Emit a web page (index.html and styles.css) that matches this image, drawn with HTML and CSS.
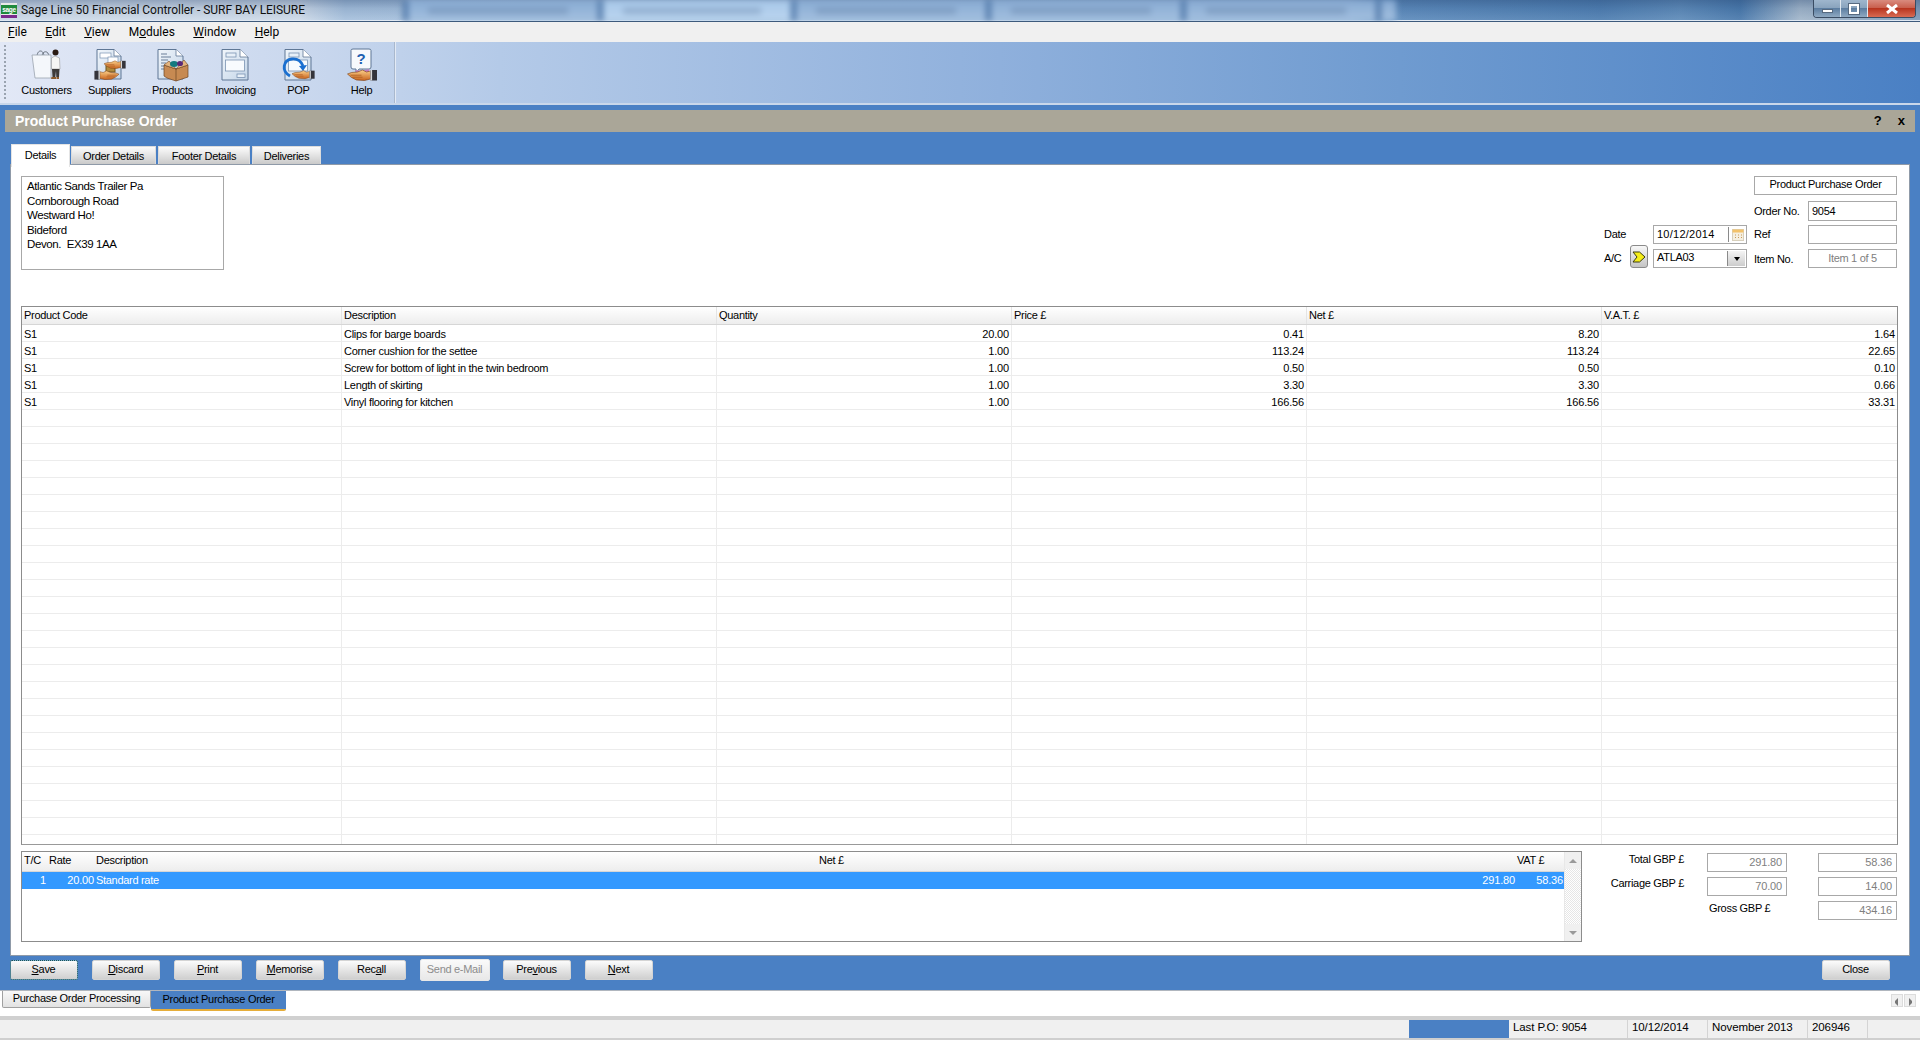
FILE: index.html
```html
<!DOCTYPE html>
<html lang="en">
<head>
<meta charset="utf-8">
<title>Sage Line 50 Financial Controller - SURF BAY LEISURE</title>
<link rel="stylesheet" href="styles.css">
</head>
<body>
<svg class="defs" width="0" height="0" aria-hidden="true">
  <defs>
    <linearGradient id="docFill" x1="0" y1="0" x2="1" y2="1"><stop offset="0" stop-color="#f1f6fb"/><stop offset="1" stop-color="#c3d5e8"/></linearGradient>
    <linearGradient id="flesh" x1="0" y1="0" x2="0" y2="1"><stop offset="0" stop-color="#fbd08a"/><stop offset="1" stop-color="#c8641e"/></linearGradient>
    <symbol id="hand" viewBox="0 0 30 12">
      <path d="M0 5 L4 3.5 L10 3 L15 1 L19 3 L23 2 L23 10 L17 11.5 L9 11 L4 8.5 Z" fill="url(#flesh)" stroke="#7a3d12" stroke-width=".6"/>
      <path d="M3 6.2 H14 M5 8.2 H15" stroke="#a8551a" stroke-width=".7" fill="none"/>
      <rect x="23" y="1" width="6.5" height="10.5" fill="#34343a"/>
      <rect x="23" y="1" width="1.6" height="10.5" fill="#d8d8d8"/>
    </symbol>
  </defs>
</svg>

<header class="titlebar">
  <svg class="appicon" viewBox="0 0 16 15" width="16" height="15">
    <rect width="16" height="15" fill="#e8e8e8"/>
    <rect y="2" width="16" height="9" fill="#1f8a3c"/>
    <rect y="12" width="16" height="3" fill="#7a2a8c"/>
    <text x="8" y="9" font-size="6.5" font-family="Liberation Sans" font-weight="700" fill="#fff" text-anchor="middle">sage</text>
  </svg>
  <span class="apptitle">Sage Line 50 Financial Controller - SURF BAY LEISURE</span>
  <div class="blurtabs" aria-hidden="true">
    <span class="bt"><i></i></span><span class="bt bright"><i></i></span><span class="bt"><i></i></span><span class="bt"><i></i></span><span class="bt"><i></i></span><span class="bt last"></span>
  </div>
  <div class="winbtns">
    <span class="wb wmin"><i></i></span>
    <span class="wb wmax"><i></i></span>
    <span class="wb wclose">
      <svg viewBox="0 0 14 10" width="14" height="10"><path d="M2 1 L12 9 M12 1 L2 9" stroke="#fff" stroke-width="3"/></svg>
    </span>
  </div>
</header>

<nav class="menubar">
  <span><u>F</u>ile</span><span><u>E</u>dit</span><span><u>V</u>iew</span><span>M<u>o</u>dules</span><span><u>W</u>indow</span><span><u>H</u>elp</span>
</nav>

<section class="toolbar">
  <div class="gripper"></div>
  <div class="tools">
    <div class="tool">
      <svg viewBox="0 0 40 34" width="40" height="34">
        <path d="M10 9 C10 1 17 1 17 9 M15 9 C15 2 22 2 22 9" fill="none" stroke="#66707c" stroke-width="1"/>
        <path d="M5 7 L24 7 L24 30 L8 30 Z" fill="#f4f7fb" stroke="#9aa3ae" stroke-width=".8"/>
        <circle cx="28.5" cy="4.5" r="3" fill="#2a1a12"/>
        <path d="M24.5 10 L28 8 L32.5 10 L33 21 L24.5 21 Z" fill="#f6f6f4" stroke="#8b8b8b" stroke-width=".5"/>
        <path d="M25 21 H32.5 L32 29 H29.3 L29 23 L28.3 29 H25.5 Z" fill="#3c3a38"/>
        <path d="M24.5 29 H29 V31 H24 Z M29.5 29 H32 V31 H29.5 Z" fill="#8b5a2a"/>
      </svg>
      <span>Customers</span>
    </div>
    <div class="tool">
      <svg viewBox="0 0 40 34" width="40" height="34">
        <path d="M7 1.5 H24 L31 8 V31 H7 Z" fill="url(#docFill)" stroke="#5f7795"/>
        <path d="M24 1.5 V8 H31" fill="#fff" stroke="#5f7795" stroke-width=".8"/>
        <rect x="10" y="5" width="11" height="5" fill="#fff" stroke="#7a93b2" stroke-width=".7"/>
        <rect x="18" y="9" width="10" height="8" fill="#fff" stroke="#7a93b2" stroke-width=".7"/>
        <rect x="16" y="16" width="9" height="8" fill="#b08a3c" stroke="#6b5420"/>
        <use href="#hand" x="14" y="12" width="22" height="9"/>
        <g transform="translate(36 0) scale(-1 1)"><use href="#hand" x="3" y="22" width="33" height="10"/></g>
      </svg>
      <span>Suppliers</span>
    </div>
    <div class="tool">
      <svg viewBox="0 0 40 34" width="40" height="34">
        <path d="M5 1.5 H23 L30 8 V31 H5 Z" fill="url(#docFill)" stroke="#5f7795"/>
        <path d="M23 1.5 V8 H30" fill="#fff" stroke="#5f7795" stroke-width=".8"/>
        <path d="M8 6 H14 M8 9 H18 M8 12 H15 M8 15 H13 M8 18 H12 M8 21 H11" stroke="#6b7f98" stroke-width="1.2"/>
        <path d="M11 17 L23 21 L35 17 L35 29 L23 33 L14 30 L11 28 Z" fill="#c78a52" stroke="#6e4522" stroke-width=".7"/>
        <path d="M23 21 V33" stroke="#6e4522" stroke-width=".7"/>
        <path d="M11 17 L16 13 L23 21 Z M35 17 L31 12 L23 21 Z" fill="#e3b47e" stroke="#6e4522" stroke-width=".6"/>
        <ellipse cx="21" cy="16" rx="4" ry="3" fill="#147a80"/>
        <ellipse cx="27" cy="15.5" rx="3" ry="2.6" fill="#5a2a78"/>
      </svg>
      <span>Products</span>
    </div>
    <div class="tool">
      <svg viewBox="0 0 40 34" width="40" height="34">
        <path d="M6 1.5 H24 L32 9 V32 H6 Z" fill="url(#docFill)" stroke="#5f7795"/>
        <path d="M24 1.5 V9 H32" fill="#fff" stroke="#5f7795" stroke-width=".8"/>
        <rect x="10" y="5" width="10" height="4" fill="#e8f0f8" stroke="#7a93b2" stroke-width=".8"/>
        <rect x="9.5" y="12" width="19" height="11" fill="#f8fbfe" stroke="#7a93b2" stroke-width=".8"/>
        <rect x="21" y="26" width="8" height="3.5" fill="#e8f0f8" stroke="#7a93b2" stroke-width=".8"/>
      </svg>
      <span>Invoicing</span>
    </div>
    <div class="tool">
      <svg viewBox="0 0 40 34" width="40" height="34">
        <path d="M6 1.5 H24 L32 9 V32 H6 Z" fill="url(#docFill)" stroke="#5f7795"/>
        <path d="M24 1.5 V9 H32" fill="#fff" stroke="#5f7795" stroke-width=".8"/>
        <rect x="10" y="5" width="10" height="4" fill="#e8f0f8" stroke="#7a93b2" stroke-width=".8"/>
        <rect x="9.5" y="12" width="19" height="11" fill="#f8fbfe" stroke="#7a93b2" stroke-width=".8"/>
        <path d="M11 28 C2 23 4 12 13 11 C18 10.5 22 13 24 18" fill="none" stroke="#1a6fd0" stroke-width="2.8"/>
        <path d="M20 18 L28 17 L24 23 Z" fill="#1a6fd0"/>
        <use href="#hand" x="13" y="21" width="23" height="11"/>
      </svg>
      <span>POP</span>
    </div>
    <div class="tool">
      <svg viewBox="0 0 40 34" width="40" height="34">
        <path d="M9 2.5 Q9 1 11 1 H27 Q29 1 29 2.5 V19 Q29 21 27 21 H17 L14 25 L14 21 H11 Q9 21 9 19 Z" fill="#f6f9fc" stroke="#5f7795"/>
        <text x="19" y="16" font-family="Liberation Sans" font-weight="700" font-size="15" fill="#1f5fb0" text-anchor="middle">?</text>
        <path d="M13 22 Q20 24 27 21 L27 24 L15 25 Z" fill="#c07ac0"/>
        <use href="#hand" x="5" y="21" width="31" height="12"/>
      </svg>
      <span>Help</span>
    </div>
  </div>
  <div class="toolsep"></div>
</section>

<main class="window">
  <div class="caption">
    <span class="caption-title">Product Purchase Order</span>
    <span class="caption-btns"><b>?</b><b>x</b></span>
  </div>

  <div class="tabs">
    <span class="tab active">Details</span>
    <span class="tab t-order">Order Details</span>
    <span class="tab t-footer">Footer Details</span>
    <span class="tab t-deliv">Deliveries</span>
  </div>

  <div class="panel">
    <div class="head">
      <div class="address">
        <div>Atlantic Sands Trailer Pa</div>
        <div>Cornborough Road</div>
        <div>Westward Ho!</div>
        <div>Bideford</div>
        <div>Devon.&nbsp; EX39 1AA</div>
      </div>
      <div class="orderform">
        <div class="frow r1"><span class="box wide center">Product Purchase Order</span></div>
        <div class="frow r2"><span class="lab lab-r">Order No.</span><span class="box num">9054</span></div>
        <div class="frow r3">
          <span class="lab lab-date">Date</span>
          <span class="box combo"><span class="dateval">10/12/2014</span><span class="cbtn cal"><svg viewBox="0 0 12 12" width="12" height="12"><rect x=".5" y=".5" width="11" height="11" fill="#f5efe0" stroke="#d8d0bc"/><rect x=".5" y=".5" width="11" height="3" fill="#f3c26a"/><path d="M3 6 H4 M6 6 H7 M9 6 H10 M3 8.5 H4 M6 8.5 H7 M9 8.5 H10" stroke="#c89a58"/></svg></span></span>
          <span class="lab lab-r">Ref</span><span class="box num"></span>
        </div>
        <div class="frow r4">
          <span class="lab lab-ac">A/C</span>
          <span class="acbtn"><svg viewBox="0 0 14 12" width="14" height="12"><path d="M1 1 H7.5 L13 6 L7.5 11 H1 L5 6 Z" fill="#f5ee18" stroke="#3a3a10"/></svg></span>
          <span class="box combo"><span class="acval">ATLA03</span><span class="cbtn drop"><i></i></span></span>
          <span class="lab lab-r lab-item">Item No.</span><span class="box num dis center">Item 1 of 5</span>
        </div>
      </div>
    </div>

    <div class="grid">
      <div class="row hdr"><span>Product Code</span><span>Description</span><span>Quantity</span><span>Price £</span><span>Net £</span><span>V.A.T. £</span></div>
      <div class="row"><span>S1</span><span>Clips for barge boards</span><span class="r">20.00</span><span class="r">0.41</span><span class="r">8.20</span><span class="r">1.64</span></div>
      <div class="row"><span>S1</span><span>Corner cushion for the settee</span><span class="r">1.00</span><span class="r">113.24</span><span class="r">113.24</span><span class="r">22.65</span></div>
      <div class="row"><span>S1</span><span>Screw for bottom of light in the twin bedroom</span><span class="r">1.00</span><span class="r">0.50</span><span class="r">0.50</span><span class="r">0.10</span></div>
      <div class="row"><span>S1</span><span>Length of skirting</span><span class="r">1.00</span><span class="r">3.30</span><span class="r">3.30</span><span class="r">0.66</span></div>
      <div class="row"><span>S1</span><span>Vinyl flooring for kitchen</span><span class="r">1.00</span><span class="r">166.56</span><span class="r">166.56</span><span class="r">33.31</span></div>
      <div class="row"><span></span><span></span><span></span><span></span><span></span><span></span></div>
      <div class="row"><span></span><span></span><span></span><span></span><span></span><span></span></div>
      <div class="row"><span></span><span></span><span></span><span></span><span></span><span></span></div>
      <div class="row"><span></span><span></span><span></span><span></span><span></span><span></span></div>
      <div class="row"><span></span><span></span><span></span><span></span><span></span><span></span></div>
      <div class="row"><span></span><span></span><span></span><span></span><span></span><span></span></div>
      <div class="row"><span></span><span></span><span></span><span></span><span></span><span></span></div>
      <div class="row"><span></span><span></span><span></span><span></span><span></span><span></span></div>
      <div class="row"><span></span><span></span><span></span><span></span><span></span><span></span></div>
      <div class="row"><span></span><span></span><span></span><span></span><span></span><span></span></div>
      <div class="row"><span></span><span></span><span></span><span></span><span></span><span></span></div>
      <div class="row"><span></span><span></span><span></span><span></span><span></span><span></span></div>
      <div class="row"><span></span><span></span><span></span><span></span><span></span><span></span></div>
      <div class="row"><span></span><span></span><span></span><span></span><span></span><span></span></div>
      <div class="row"><span></span><span></span><span></span><span></span><span></span><span></span></div>
      <div class="row"><span></span><span></span><span></span><span></span><span></span><span></span></div>
      <div class="row"><span></span><span></span><span></span><span></span><span></span><span></span></div>
      <div class="row"><span></span><span></span><span></span><span></span><span></span><span></span></div>
      <div class="row"><span></span><span></span><span></span><span></span><span></span><span></span></div>
      <div class="row"><span></span><span></span><span></span><span></span><span></span><span></span></div>
      <div class="row"><span></span><span></span><span></span><span></span><span></span><span></span></div>
      <div class="row"><span></span><span></span><span></span><span></span><span></span><span></span></div>
      <div class="row"><span></span><span></span><span></span><span></span><span></span><span></span></div>
      <div class="row"><span></span><span></span><span></span><span></span><span></span><span></span></div>
      <div class="row"><span></span><span></span><span></span><span></span><span></span><span></span></div>
      <div class="row"><span></span><span></span><span></span><span></span><span></span><span></span></div>
    </div>

    <div class="foot">
      <div class="taxgrid">
        <div class="taxmain">
          <div class="taxrow taxhdr"><span>T/C</span><span>Rate</span><span>Description</span><span>Net £</span><span>VAT £</span></div>
          <div class="taxrow sel"><span class="r tc">1</span><span class="r">20.00</span><span>Standard rate</span><span class="r">291.80</span><span class="r">58.36</span></div>
        </div>
        <div class="scroll">
          <span class="sb-btn"><i class="up"></i></span>
          <span class="sb-track"></span>
          <span class="sb-btn"><i class="down"></i></span>
        </div>
      </div>
      <div class="totals">
        <span class="tl">Total GBP £</span><span class="box tv tmid">291.80</span><span class="box tv">58.36</span>
        <span class="tl">Carriage GBP £</span><span class="box tv tmid">70.00</span><span class="box tv">14.00</span>
        <span class="tl"></span><span class="gross">Gross GBP £</span><span class="box tv">434.16</span>
      </div>
    </div>
  </div>

  <div class="actions">
    <button class="btn focus"><u>S</u>ave</button>
    <button class="btn"><u>D</u>iscard</button>
    <button class="btn"><u>P</u>rint</button>
    <button class="btn"><u>M</u>emorise</button>
    <button class="btn">Rec<u>a</u>ll</button>
    <button class="btn off">Send e-Mail</button>
    <button class="btn">Pre<u>v</u>ious</button>
    <button class="btn"><u>N</u>ext</button>
    <button class="btn close">Close</button>
  </div>
</main>

<div class="doctabs">
  <span class="dt">Purchase Order Processing</span>
  <span class="dt cur">Product Purchase Order</span>
  <span class="dtarrows"><i class="al"></i><i class="ar"></i></span>
</div>

<footer class="status">
  <span class="st-blank"></span>
  <span class="st-blue"></span>
  <span class="st s1">Last P.O: 9054</span>
  <span class="st s2">10/12/2014</span>
  <span class="st s3">November 2013</span>
  <span class="st s4">206946</span>
  <span class="st s5"></span>
</footer>
</body>
</html>
```
FILE: styles.css
```css
* { box-sizing: border-box; }
html, body { margin: 0; padding: 0; }
body {
  width: 1920px; height: 1040px; overflow: hidden;
  display: flex; flex-direction: column;
  font-family: "Liberation Sans", Roboto, sans-serif;
  font-size: 11px; line-height: 13px; letter-spacing: -0.3px; color: #000;
  background: #4a80c4;
}
.defs { position: absolute; }
u { text-decoration: underline; }

/* title bar */
.titlebar {
  height: 22px; flex: none; display: flex; align-items: flex-start; overflow: hidden;
  background:
    linear-gradient(180deg, rgba(30,60,105,.35) 0, rgba(30,60,105,.12) 40%, rgba(255,255,255,.08) 100%),
    linear-gradient(90deg, #cfdbe9 0, #cfdbe9 300px, #a8c2de 345px, #97b7da 1350px, #5e8cbd 1395px, #4f7fb2 1600px, #5f8cba 1680px, #4a7aad 1740px, #a4b8cc 1800px, #7f9cba 1920px);
  border-bottom: 1px solid #3d5a7c;
  box-shadow: inset 0 -1px 0 #dfe8f2;
}
.appicon { margin: 3px 4px 0 1px; flex: none; }
.apptitle { font: 12px/20px Roboto, sans-serif; letter-spacing: -0.05px; color: #101010; width: 284px; flex: none; white-space: nowrap; }
.blurtabs { display: flex; width: 1000px; margin-left: 98px; height: 21px; filter: blur(3px); flex: none; }
.bt { width: 195px; height: 21px; background: linear-gradient(180deg, #86a9d2, #a4c1e0); border-left: 5px solid #4f77a8; padding: 8px 30px 0 20px; }
.bt i { display: block; height: 6px; background: rgba(80,110,150,.35); }
.bt.bright { width: 193px; background: linear-gradient(180deg, #a6c6e8, #bcd6f0); }
.bt.last { width: 20px; padding: 0; }
.winbtns { margin-left: auto; margin-right: 4px; display: flex; height: 18px; border: 1px solid #3a4c63; border-top: 0; border-radius: 0 0 4px 4px; overflow: hidden; flex: none; }
.wb { display: flex; align-items: center; justify-content: center; height: 17px; }
.wmin, .wmax { width: 27px; background: linear-gradient(180deg, #9fb6cd 0, #8aa4be 45%, #5d7ea1 50%, #8fa9c2 100%); border-right: 1px solid #dfe7ef; }
.wmin i { width: 11px; height: 4px; background: #fff; border: 1px solid #576a80; margin-top: 5px; }
.wmax i { width: 10px; height: 10px; border: 2px solid #fff; outline: 1px solid #576a80; }
.wclose { width: 47px; background: linear-gradient(180deg, #d98b7e 0, #c9604e 45%, #b8351f 50%, #d86a52 100%); }

/* menu */
.menubar { height: 20px; flex: none; background: #f0f0f0; display: flex; gap: 18.5px; padding: 3px 0 0 8px; font: 12px/15px Roboto, sans-serif; letter-spacing: 0; }

/* toolbar */
.toolbar {
  height: 63px; flex: none; display: flex;
  background: linear-gradient(90deg, #e2e8f6 0, #cad8ee 300px, #b4cae8 500px, #8fb0dc 1000px, #6f9bd0 1400px, #4a80c4 1920px);
  border-bottom: 2px solid #c9d7ea;
}
.gripper { width: 2px; margin: 3px 0 4px 4px; border-left: 2px dotted #9aa3b0; flex: none; }
.tools { display: flex; margin-left: 9px; flex: none; }
.tool { width: 63px; display: flex; flex-direction: column; align-items: center; padding-top: 6px; }
.tool span { line-height: 13px; margin-top: 2px; }
.toolsep { width: 1px; margin-left: 1px; height: 61px; background: #a9b8cd; box-shadow: 1px 0 0 #e3eaf5; flex: none; }

/* window */
.window { flex: 1; min-height: 0; display: flex; flex-direction: column; padding-top: 5px; background: #4a80c4; }
.caption { height: 22px; flex: none; margin: 0 5px; background: #aaa698; display: flex; align-items: center; justify-content: space-between; padding: 0 10px; color: #fff; letter-spacing: 0; }
.caption-title { font: 700 14px/22px "Liberation Sans", sans-serif; }
.caption-btns { display: flex; gap: 16px; color: #000; font: 700 13px/22px "Liberation Sans", sans-serif; }

.tabs { display: flex; height: 20px; margin: 12px 0 0 11px; flex: none; align-items: flex-end; position: relative; z-index: 1; }
.tab { height: 18px; padding-top: 2px; background: linear-gradient(180deg, #fcfcfc, #cacaca); border: 1px solid #dcdcdc; border-bottom: 0; margin-right: 2px; display: flex; align-items: center; justify-content: center; }
.tab.active { width: 59px; height: 23px; background: #fff; margin-right: 1px; margin-bottom: -3px; align-self: flex-end; padding: 0 0 1px; border-color: #e4e4e4; }
.t-order { width: 85px; }
.t-footer { width: 92px; }
.t-deliv { width: 69px; }

.panel { flex: 1; min-height: 0; margin: 0 10px 0 10px; background: #fff; border: 1px solid #8f9aa8; padding: 11px 11px 13px 10px; display: flex; flex-direction: column; }

.head { display: flex; justify-content: space-between; height: 130px; flex: none; }
.address { width: 203px; height: 94px; border: 1px solid #a8a8a8; padding: 2px 5px; font-size: 11.5px; line-height: 14.6px; letter-spacing: -0.4px; }

.orderform { width: 293px; margin-right: 1px; display: flex; flex-direction: column; }
.frow { display: flex; align-items: center; justify-content: flex-end; }
.r1 { height: 19px; }
.r2 { height: 20px; margin-top: 6px; }
.r3 { height: 19px; margin-top: 4px; }
.r4 { height: 19px; margin-top: 5px; }
.box { border: 1px solid #a8a8a8; height: 100%; display: flex; align-items: center; background: #fff; }
.wide { width: 143px; padding-bottom: 2px; }
.center { justify-content: center; }
.num { width: 89px; padding-left: 3px; }
.dis { color: #808080; padding-left: 0; }
.lab { white-space: nowrap; }
.lab-r { width: 54px; margin-left: 7px; }
.lab-item { padding-top: 2px; }
.lab-date { width: 49px; }
.lab-ac { width: 26px; }
.acbtn { width: 18px; height: 23px; margin: -4px 5px 0 0; border: 1px solid #8a8a8a; border-radius: 3px; background: linear-gradient(180deg, #f8f8f8, #c4c4c4); display: flex; align-items: center; justify-content: center; flex: none; }
.combo { width: 94px; padding-left: 3px; justify-content: space-between; }
.dateval { letter-spacing: 0.25px; padding-bottom: 1px; }
.acval { padding-bottom: 2px; }
.cbtn { width: 18px; height: 15px; border-left: 1px solid #8a8a8a; display: flex; align-items: center; justify-content: center; }
.drop { background: linear-gradient(180deg, #f4f4f4, #cdcdcd); margin-right: 1px; }
.drop i { border: 3.5px solid transparent; border-top: 4px solid #000; border-bottom: 0; }

.grid { flex: 1; min-height: 0; overflow: hidden; border: 1px solid #8c8c8c; border-bottom-color: #999; }
.row { display: grid; grid-template-columns: 320px 375px 295px 295px 295px 1fr; height: 17px; border-bottom: 1px solid #ececec; }
.row span { padding: 0 2px; border-right: 1px solid #ececec; line-height: 18px; white-space: nowrap; overflow: hidden; }
.row span:last-child { border-right: 0; }
.row .r { text-align: right; padding-right: 2px; letter-spacing: -0.15px; }
.hdr { height: 18px; background: linear-gradient(180deg, #fff, #ededed); border-bottom: 1px solid #d6d6d6; }
.hdr span { line-height: 16px; border-right-color: #e4e4e4; }

.foot { display: flex; height: 91px; margin-top: 6px; flex: none; }
.taxgrid { width: 1561px; display: flex; border: 1px solid #8c8c8c; flex: none; }
.taxmain { flex: 1; min-width: 0; }
.taxrow { display: grid; grid-template-columns: 26px 47px 723px 698px 1fr; }
.taxrow span { white-space: nowrap; padding: 0 0 0 1px; }
.taxrow .r { text-align: right; padding: 0 1px 0 0; letter-spacing: -0.15px; }
.taxhdr { height: 20px; background: linear-gradient(180deg, #fff, #ededed); border-bottom: 1px solid #d6d6d6; line-height: 17px; }
.taxhdr span:first-child { padding-left: 2px; }
.sel { height: 17px; background: #3399ff; color: #fff; line-height: 16px; }
.sel .tc { padding-right: 2px; }
.scroll { width: 17px; display: flex; flex-direction: column; background: #f0f0f0; border-left: 1px solid #e8e8e8; flex: none; }
.sb-btn { height: 17px; display: flex; align-items: center; justify-content: center; flex: none; }
.sb-track { flex: 1; background: repeating-conic-gradient(#fff 0 25%, #e6e6e6 0 50%) 0 0 / 2px 2px; }
.up { border: 4px solid transparent; border-bottom: 4px solid #9a9a9a; border-top: 0; }
.down { border: 4px solid transparent; border-top: 4px solid #9a9a9a; border-bottom: 0; }

.totals { margin-left: 1px; display: grid; grid-template-columns: 101px 134px 79px; grid-template-rows: 19px 19px 19px; row-gap: 5px; padding-top: 2px; align-items: start; height: 70px; }
.tl { text-align: right; white-space: nowrap; line-height: 12px; }
.box.tv { height: 19px; justify-content: flex-end; padding-right: 4px; color: #808080; letter-spacing: -0.15px; }
.box.tmid { margin-left: 23px; width: 80px; }
.gross { white-space: nowrap; padding-left: 25px; line-height: 12px; margin-top: 1px; }

.actions { height: 34px; flex: none; display: flex; align-items: flex-start; gap: 14px; padding: 4px 30px 0 10px; }
.btn { width: 68px; height: 20px; padding: 0 1px 2px 0; font: 11px/16px "Liberation Sans", sans-serif; letter-spacing: -0.3px; color: #000; background: linear-gradient(180deg, #fbfbfb, #cfcfcf); border: 1px solid #d4d4d4; border-radius: 2px; }
.btn.focus { outline: 1px dotted #1c4f5c; outline-offset: -1px; border-color: #7fb4c9; }
.btn.off { color: #8c8c8c; width: 70px; background: linear-gradient(180deg, #fafafa, #e8e8e8); margin: -1px -1px 0 0; height: 22px; border-color: #e8e8e8; }
.btn.close { margin-left: auto; }

.doctabs { height: 26px; flex: none; background: #fff; border-top: 1px solid #b0b6be; display: flex; align-items: flex-start; padding-left: 2px; }
.dt { height: 17px; width: 149px; border: 1px solid #a0a0a0; border-top: 0; border-radius: 0 0 2px 2px; background: linear-gradient(180deg, #f8f8f8, #e2e2e2); text-align: center; line-height: 14px; }
.dt.cur { width: 135px; height: 20px; background: #4a80c4; border: 0; border-bottom: 2px solid #e5ad3a; color: #000; line-height: 16px; }
.dtarrows { margin-left: auto; margin-right: 4px; margin-top: 3px; display: flex; gap: 1px; }
.dtarrows i { width: 12px; height: 13px; background: #f0f0f0; border: 1px solid #dcdcdc; display: flex; }
.al::after { content: ""; margin: 3px 0 0 3px; border: 3px solid transparent; border-right: 3px solid #777; border-left: 0; }
.ar::after { content: ""; margin: 3px 0 0 4px; border: 3px solid transparent; border-left: 3px solid #777; border-right: 0; }

.status { height: 24px; flex: none; background: #f0f0f0; display: flex; border-top: 4px solid #d0d0d0; border-bottom: 2px solid #cfcfcf; }
.st-blank { width: 1409px; }
.st-blue { width: 100px; background: #4a80c4; }
.st { border-right: 1px solid #d4d4d4; padding-left: 4px; line-height: 15px; font-size: 11.5px; letter-spacing: -0.1px; white-space: nowrap; }
.s1 { width: 119px; }
.s2 { width: 80px; }
.s3 { width: 100px; }
.s4 { width: 60px; }
.s5 { flex: 1; border-right: 0; }
```
